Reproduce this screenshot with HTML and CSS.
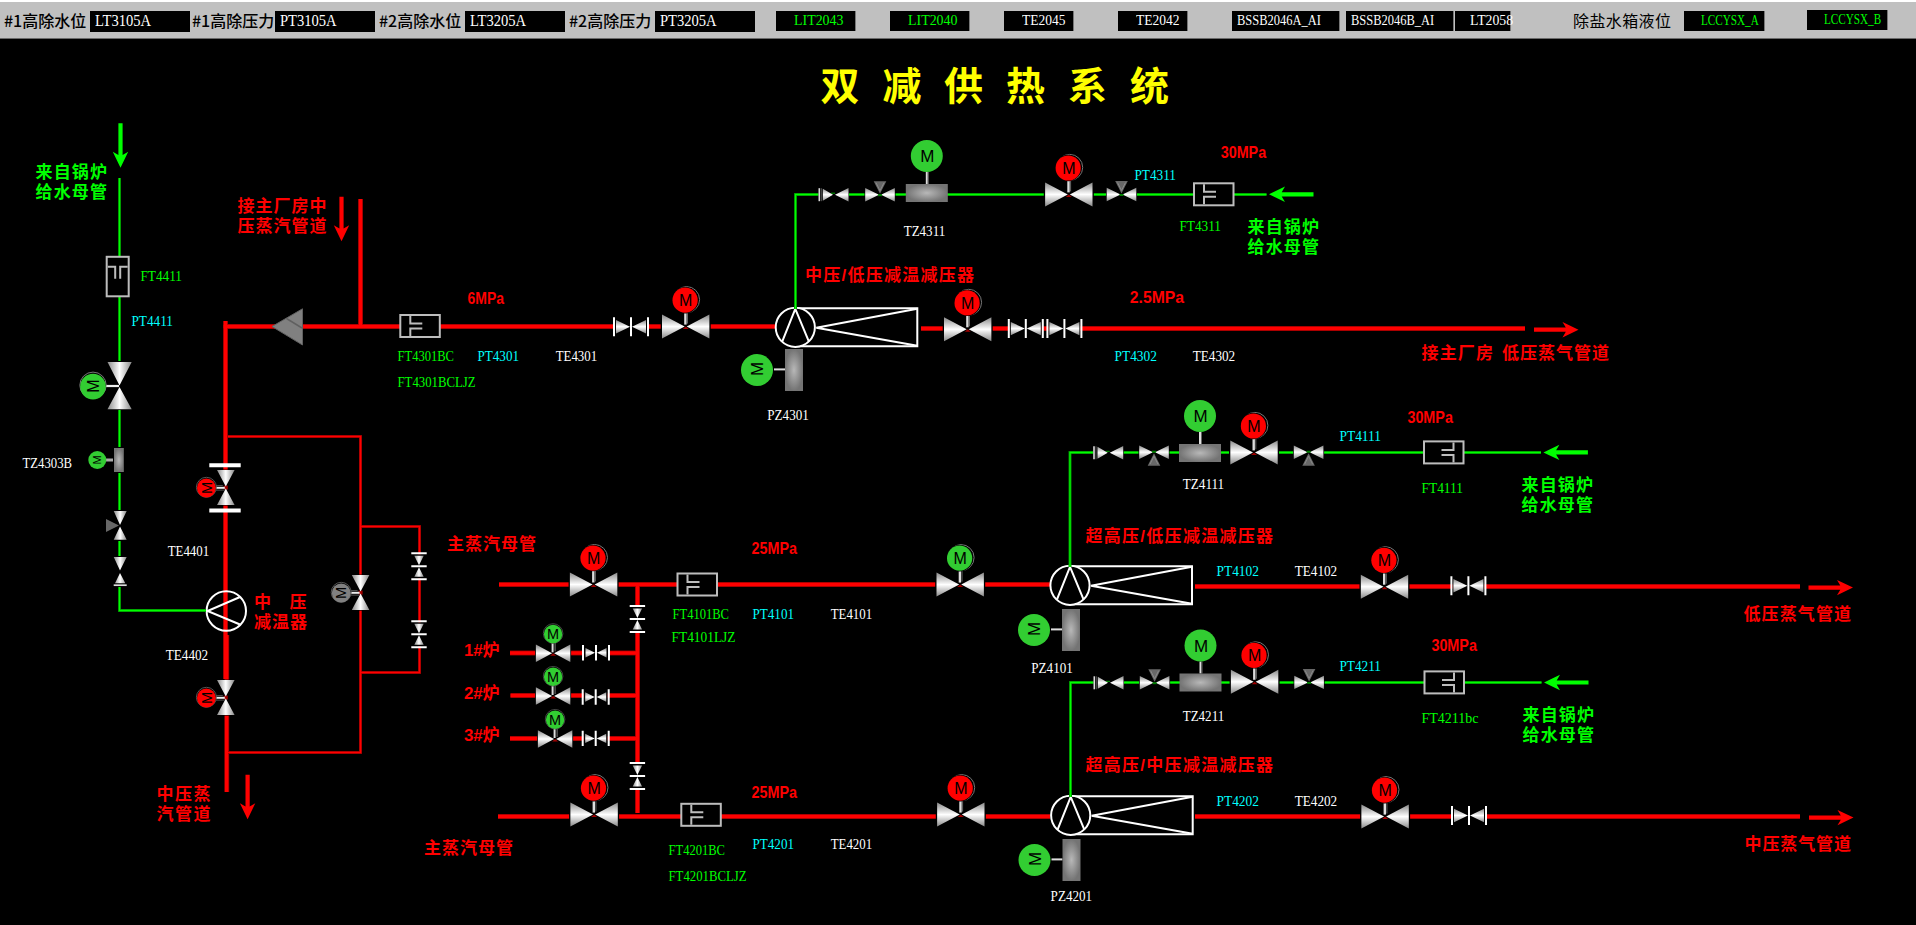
FILE: index.html
```html
<!DOCTYPE html>
<html lang="zh-CN">
<head>
<meta charset="utf-8">
<title>双减供热系统</title>
<link rel="stylesheet" href="styles.css">
</head>
<body>
<header class="bar">
  <span class="name n1">#1高除水位</span><span class="box wide b1"><b>LT3105A</b></span>
  <span class="name n2">#1高除压力</span><span class="box wide b2"><b>PT3105A</b></span>
  <span class="name n3">#2高除水位</span><span class="box wide b3"><b>LT3205A</b></span>
  <span class="name n4">#2高除压力</span><span class="box wide b4"><b>PT3205A</b></span>
  <span class="box lit b5"><b>LIT2043</b></span>
  <span class="box lit b6"><b>LIT2040</b></span>
  <span class="box te b7"><b>TE2045</b></span>
  <span class="box te b8"><b>TE2042</b></span>
  <span class="box bss b9"><b>BSSB2046A_AI</b></span>
  <span class="box bss b10"><b>BSSB2046B_AI</b></span>
  <span class="box lt b11"><b>LT2058</b></span>
  <span class="name tank">除盐水箱液位</span>
  <span class="box lcc b12"><b>LCCYSX_A</b></span>
  <span class="box lcc b13"><b>LCCYSX_B</b></span>
</header>
<main class="stage">
<svg class="diagram" width="1916" height="886" viewBox="0 39 1916 886">
<defs>
  <linearGradient id="gv" x1="0" y1="0" x2="0" y2="1"><stop offset="0" stop-color="#8a8a8a"/><stop offset=".5" stop-color="#fff"/><stop offset="1" stop-color="#8a8a8a"/></linearGradient>
  <linearGradient id="gh" x1="0" y1="0" x2="1" y2="0"><stop offset="0" stop-color="#8a8a8a"/><stop offset=".5" stop-color="#fff"/><stop offset="1" stop-color="#8a8a8a"/></linearGradient>
  <radialGradient id="gr"><stop offset="0" stop-color="#b8b8b8"/><stop offset="1" stop-color="#747474"/></radialGradient>

  <g id="valve">
    <rect x="-25" y="-13" width="50" height="26" fill="#000"/>
    <path d="M-3 2.5L0 0L3 2.5Z" fill="#a00000"/>
    <path d="M-23.7-12L-1 0L-23.7 12Z" fill="url(#gv)"/>
    <path d="M23.7-12L1 0L23.7 12Z" fill="url(#gv)"/>
    <path d="M-.3-14V-2" stroke="#ddd" stroke-width="2.4"/><path d="M1.8-14V-3" stroke="#666"/>
    <circle cx=".9" cy="-27" r="13" fill="none" stroke="#777"/>
    <circle cx="-.6" cy="-26.4" r="13.2" fill="#000"/>
    <circle cx="-.6" cy="-26.4" r="12.6" fill="currentColor"/>
    <text class="m" x="0" y="-20.6" font-size="16">M</text>
  </g>
  <g id="valve-s">
    <rect x="-18" y="-9.5" width="36" height="19" fill="#000"/>
    <path d="M-3 2.5L0 0L3 2.5Z" fill="#a00000"/>
    <path d="M-17.2-8.7L-1 0L-17.2 8.7Z" fill="url(#gv)"/>
    <path d="M17.2-8.7L1 0L17.2 8.7Z" fill="url(#gv)"/>
    <path d="M-.5-11V-1" stroke="#ddd" stroke-width="2"/><path d="M2-11V-2" stroke="#777"/>
    <circle cx="0" cy="-19.8" r="9.8" fill="none" stroke="#444"/>
    <circle cx="0" cy="-19.3" r="9.2" fill="currentColor"/>
    <text class="m" x="0" y="-14" font-size="14.5">M</text>
  </g>
  <g id="valve-v">
    <rect x="-9.5" y="-18" width="19" height="36" fill="#000"/>
    <path d="M-2-2H2V2H-2Z" fill="#a00000"/>
    <path d="M-8.8-17.5L0-1L8.8-17.5Z" fill="url(#gh)"/>
    <path d="M-8.8 17.5L0 1L8.8 17.5Z" fill="url(#gh)"/>
    <path d="M-10 .2H-1" stroke="#eee" stroke-width="2"/><path d="M-10 2.5H-1M-10-2H-3" stroke="#555"/>
    <circle cx="-19.4" cy="-.3" r="10" fill="none" stroke="#555"/>
    <circle cx="-19.4" cy=".4" r="9.4" fill="currentColor"/>
    <text class="m" transform="translate(-14.2 .4) rotate(-90)" font-size="14.5">M</text>
  </g>
  <g id="pair">
    <rect x="-16" y="-7" width="32" height="14" fill="#000"/>
    <path d="M-15-6.7L-1 0L-15 6.7ZM15-6.7L1 0L15 6.7Z" fill="url(#gv)"/>
    <path d="M-17-9.5V9.5M0-9.5V9.5M17-9.5V9.5" stroke="#fff" stroke-width="2"/>
  </g>
  <g id="pair-s">
    <rect x="-12" y="-6" width="24" height="12" fill="#000"/>
    <path d="M-10.5-4.7L-1 0L-10.5 4.7ZM10.5-4.7L1 0L10.5 4.7Z" fill="url(#gv)"/>
    <path d="M-13-7.7V7.7M0-7.7V7.7M13-7.7V7.7" stroke="#fff" stroke-width="2"/>
  </g>
  <g id="check">
    <rect x="-15.5" y="-7" width="30.5" height="14" fill="#000"/>
    <path d="M-3-1.5H1" stroke="#00a000"/>
    <path d="M-11.2-6L-1 0L-11.2 6ZM14.5-6.7L1 0L14.5 6.7Z" fill="url(#gv)"/>
    <path d="M-14.7-6.5V6.5" stroke="#ddd" stroke-width="1.6"/><path d="M-12.7-6.5V6.5" stroke="#555"/>
  </g>
  <g id="three">
    <rect x="-15.5" y="-7" width="31" height="14" fill="#000"/>
    <path d="M-6.3-13.5H6.3L0-1Z" fill="#686868"/><path d="M-4-12L0-4L4-12" fill="none" stroke="#8a8a8a"/>
    <path d="M-14.8-6.7L-1 0L-14.8 6.7ZM14.8-6.7L1 0L14.8 6.7Z" fill="url(#gv)"/>
    <path d="M-2 .5H2" stroke="#008000" stroke-width="2"/>
  </g>
  <g id="flow">
    <rect x="1" y="1" width="39.5" height="22" fill="#000" stroke="#bdbdbd" stroke-width="2"/>
    <path d="M11 2V9.5H23M11 22V14.5H23" fill="none" stroke="#bdbdbd" stroke-width="2"/>
  </g>
  <g id="reg">
    <path d="M0 16V28" stroke="#ddd" stroke-width="2"/><path d="M1.5 16V28" stroke="#666"/>
    <rect x="-21" y="28" width="42" height="18" fill="url(#gr)"/>
    <circle r="16" fill="#32cd32"/><text class="m" x=".6" y="6.3" font-size="17">M</text>
  </g>
  <g id="pump">
    <path d="M17-.6H28" stroke="#ddd" stroke-width="2"/>
    <rect x="28" y="-21" width="18" height="42" fill="url(#gr)"/>
    <circle r="16" fill="#32cd32"/><text class="m" transform="translate(6 -1) rotate(-90)" font-size="17">M</text>
  </g>
  <g id="reducer" fill="none" stroke="#fff" stroke-width="2">
    <path d="M0-19H122V19H0" fill="#000"/>
    <path d="M122-18.5L21 .4L122 18.5"/>
    <circle r="19.6" fill="#000"/>
    <path d="M-13 14L0-18.5L13.5 14"/>
  </g>
  <path id="arrow" d="M0 0L-7.7-16L-2.1-12.7V-44.5H2.1V-12.7L7.7-16Z" fill="currentColor"/>

  <g id="steam-pipes" fill="none">
    <path d="M225.5 321V679M226.7 635V792M223.5 326.5H775M360.5 199V328M921 328.5H1525M499 584.5H1050M1195 586.5H1800M498 816.5H1050M1195 816.5H1800M637.5 586V813M510 653H638M510.5 695.5H638M510 738.5H638"/>
  </g>
  <path id="bypass" fill="none" d="M228 436.5H360.5V752.5H228M361 526.5H419.5V672.5H361"/>
  <path id="water-pipes" fill="none" d="M119.5 178V610.5H206M795.5 309V194.5H1266.5M1070 567V452.5H1541M1070.5 797V682.5H1541.5"/>
</defs>

<use href="#steam-pipes" stroke="#900000" stroke-width="5"/>
<use href="#steam-pipes" stroke="#ff0000" stroke-width="3.4"/>
<use href="#bypass" stroke="#900000" stroke-width="3"/>
<use href="#bypass" stroke="#ff0000" stroke-width="1.6"/>

<g fill="none" stroke="#fff" stroke-width="2">
  <circle cx="226.3" cy="611" r="19.7"/><path d="M240 597L207.5 611L240 624.5"/>
</g>
<use href="#reducer" x="795.3" y="327.3"/>
<use href="#reducer" x="1070" y="585.3"/>
<use href="#reducer" x="1070.7" y="815.3"/>
<use href="#water-pipes" stroke="#008c00" stroke-width="3"/>
<use href="#water-pipes" stroke="#00ff00" stroke-width="1.3"/>

<g class="green">
  <use href="#arrow" x="120.5" y="167.7"/>
  <use href="#arrow" transform="translate(1269 194.3) rotate(90)"/>
  <use href="#arrow" transform="translate(1543.4 452.4) rotate(90)"/>
  <use href="#arrow" transform="translate(1544 682.5) rotate(90)"/>
</g>
<g class="red">
  <use href="#arrow" x="341.5" y="241.3"/>
  <use href="#arrow" x="247.6" y="819.3"/>
  <use href="#arrow" transform="translate(1578.5 329.7) rotate(-90)"/>
  <use href="#arrow" transform="translate(1853 587.6) rotate(-90)"/>
  <use href="#arrow" transform="translate(1853.5 817.6) rotate(-90)"/>
</g>

<!-- feed-water branch on the left -->
<use href="#flow" transform="translate(129.7 255.8) rotate(90)"/>
<g>
  <rect x="107" y="361" width="25" height="49" fill="#000"/>
  <path d="M107.5 362L119.5 385.5L131.7 362ZM107.5 409.3L119.5 387L131.7 409.3Z" fill="url(#gh)"/>
  <path d="M106 386H119" stroke="#eee" stroke-width="2.2"/>
  <circle cx="93" cy="385.3" r="13.2" fill="none" stroke="#777"/>
  <circle cx="93" cy="386.6" r="12.8" fill="#32cd32"/>
  <text class="m" transform="translate(99 386) rotate(-90)" font-size="16">M</text>
</g>
<g>
  <path d="M106 460H114" stroke="#aaa" stroke-width="3"/>
  <rect x="113" y="447" width="12" height="26" fill="#000"/>
  <rect x="114" y="448" width="9.8" height="24" fill="url(#gr)"/>
  <circle cx="97.3" cy="460" r="9" fill="#32cd32"/>
  <text class="m" transform="translate(101.2 460) rotate(-90)" font-size="11">M</text>
</g>
<g>
  <rect x="113" y="510" width="14" height="31" fill="#000"/>
  <path d="M106 519V532L119 525.5Z" fill="#686868"/>
  <path d="M113.7 511L120 525L126.7 511ZM113.7 539.8L120 526.5L126.7 539.8Z" fill="url(#gh)"/>
  <rect x="113" y="556" width="14" height="31" fill="#000"/>
  <path d="M113.7 557L120 570.5L126.7 557ZM115 583.3L120 573L125.3 583.3Z" fill="url(#gh)"/>
  <path d="M113.7 585.2H126.7" stroke="#ddd" stroke-width="1.7"/>
</g>

<!-- medium-pressure desuperheater column -->
<path d="M209.3 465.3H240.7M209.3 510.6H240.7" stroke="#fff" stroke-width="4"/>
<use class="red" href="#valve-v" x="225.8" y="487.6"/>
<use class="red" href="#valve-v" x="225.8" y="697.6"/>
<use class="gray" href="#valve-v" x="360.6" y="592.6"/>
<use href="#pair-s" transform="translate(419 566.3) rotate(90)"/>
<use href="#pair-s" transform="translate(419 634.3) rotate(90)"/>
<path d="M272 326.5L302.5 308.8V345Z" fill="#808080" stroke="#606060"/><path d="M286.5 318.5L302 328" stroke="#606060" stroke-width="1.5"/>

<!-- 6 MPa line -->
<use href="#flow" x="399.3" y="314"/>
<use href="#pair" x="631" y="326.7"/>
<use class="red" href="#valve" x="685.7" y="326.6"/>
<use href="#pump" x="757" y="370"/>
<use href="#check" x="834" y="194.7"/>
<use href="#three" x="880" y="194.7"/>
<use href="#reg" x="926.8" y="156"/>
<use class="red" href="#valve" x="1068.8" y="194.4"/>
<use href="#three" x="1121.5" y="194.5"/>
<use href="#flow" x="1193" y="182.3"/>
<use class="red" href="#valve" x="967.7" y="329.3"/>
<use href="#pair" x="1025.8" y="328.6"/>
<use href="#pair" x="1064.4" y="328.6"/>

<!-- upper 25 MPa line -->
<use class="red" href="#valve" x="593.6" y="584.5"/>
<use href="#flow" x="676.5" y="572.5"/>
<use class="lime" href="#valve" x="960.2" y="584.6"/>
<use href="#pump" x="1034" y="630"/>
<use href="#check" x="1108.7" y="452.8"/>
<use href="#three" transform="translate(1154 452.2) scale(1 -1)"/>
<use href="#reg" x="1200" y="416"/>
<use class="red" href="#valve" x="1254" y="452.4"/>
<use href="#three" transform="translate(1308.6 452.2) scale(1 -1)"/>
<use href="#flow" transform="translate(1464.5 440.4) scale(-1 1)"/>
<use class="red" href="#valve" x="1384.5" y="586.7"/>
<use href="#pair" x="1468.4" y="585.7"/>

<!-- boiler headers -->
<use href="#pair-s" transform="translate(637.4 619) rotate(90)"/>
<use href="#pair-s" transform="translate(637.4 776) rotate(90)"/>
<use class="lime" href="#valve-s" x="553.1" y="653.3"/>
<use class="lime" href="#valve-s" x="553.1" y="696"/>
<use class="lime" href="#valve-s" x="555.1" y="739"/>
<use href="#pair-s" x="596" y="652.7"/>
<use href="#pair-s" x="595.7" y="697"/>
<use href="#pair-s" x="595.7" y="738.4"/>

<!-- lower 25 MPa line -->
<use class="red" href="#valve" x="594.1" y="814.6"/>
<use href="#flow" x="680.3" y="802.8"/>
<use class="red" href="#valve" x="960.8" y="814.6"/>
<use href="#pump" x="1034.5" y="860"/>
<use href="#check" x="1109" y="682.8"/>
<use href="#three" x="1154.6" y="682.7"/>
<use href="#reg" x="1200.5" y="645.5"/>
<use class="red" href="#valve" x="1254.6" y="681.8"/>
<use href="#three" x="1309.1" y="682.4"/>
<use href="#flow" transform="translate(1465 670.4) scale(-1 1)"/>
<use class="red" href="#valve" x="1385.1" y="816.6"/>
<use href="#pair" x="1469" y="815.5"/>

<text class="title" x="820.5 882.5 944 1006 1068 1130" y="99.5">双减供热系统</text>

<g class="label green">
  <text x="35.5" y="178" textLength="71.5">来自锅炉</text><text x="35.5" y="198" textLength="71.5">给水母管</text>
  <text x="1247.5" y="233" textLength="71.5">来自锅炉</text><text x="1247.5" y="253" textLength="71.5">给水母管</text>
  <text x="1521.5" y="491" textLength="71.5">来自锅炉</text><text x="1521.5" y="511" textLength="71.5">给水母管</text>
  <text x="1522.5" y="721" textLength="71.5">来自锅炉</text><text x="1522.5" y="741" textLength="71.5">给水母管</text>
</g>
<g class="label red">
  <text x="237.5" y="212" textLength="89">接主厂房中</text><text x="237.5" y="232" textLength="89">压蒸汽管道</text>
  <text x="254" y="608">中</text><text x="289.5" y="608">压</text><text x="254" y="628" textLength="53">减温器</text>
  <text x="156.5" y="800" textLength="54">中压蒸</text><text x="156.5" y="820" textLength="54">汽管道</text>
  <text x="805" y="281" textLength="169">中压/低压减温减压器</text>
  <text x="1421.5" y="359" textLength="71.5">接主厂房</text><text x="1502" y="359" textLength="107">低压蒸气管道</text>
  <text x="447" y="550" textLength="89">主蒸汽母管</text>
  <text x="424" y="854" textLength="89">主蒸汽母管</text>
  <text x="464" y="656" textLength="35.5">1#炉</text><text x="464" y="699" textLength="35.5">2#炉</text><text x="464" y="741" textLength="35.5">3#炉</text>
  <text x="1085.5" y="542" textLength="187.5">超高压/低压减温减压器</text>
  <text x="1085.5" y="771" textLength="187.5">超高压/中压减温减压器</text>
  <text x="1743.5" y="620" textLength="107.5">低压蒸气管道</text>
  <text x="1744.5" y="850" textLength="106.5">中压蒸气管道</text>
</g>
<g class="mpa red">
  <text x="467.5" y="304" textLength="36.5" lengthAdjust="spacingAndGlyphs">6MPa</text>
  <text x="1220.7" y="158" textLength="45.5" lengthAdjust="spacingAndGlyphs">30MPa</text>
  <text x="1129.8" y="303" textLength="54.3" lengthAdjust="spacingAndGlyphs">2.5MPa</text>
  <text x="1407.4" y="423" textLength="45.5" lengthAdjust="spacingAndGlyphs">30MPa</text>
  <text x="1431.4" y="651" textLength="45.5" lengthAdjust="spacingAndGlyphs">30MPa</text>
  <text x="751.5" y="554" textLength="45.5" lengthAdjust="spacingAndGlyphs">25MPa</text>
  <text x="751.5" y="798" textLength="45.5" lengthAdjust="spacingAndGlyphs">25MPa</text>
</g>
<g class="tag green">
  <text x="140.5" y="281" textLength="41.5" lengthAdjust="spacingAndGlyphs">FT4411</text>
  <text x="397.5" y="361" textLength="56.5" lengthAdjust="spacingAndGlyphs">FT4301BC</text>
  <text x="397.5" y="387" textLength="78" lengthAdjust="spacingAndGlyphs">FT4301BCLJZ</text>
  <text x="1179.5" y="231" textLength="41.5" lengthAdjust="spacingAndGlyphs">FT4311</text>
  <text x="1421.5" y="493" textLength="41.5" lengthAdjust="spacingAndGlyphs">FT4111</text>
  <text x="1421.5" y="723" textLength="57" lengthAdjust="spacingAndGlyphs">FT4211bc</text>
  <text x="672.5" y="619" textLength="56.5" lengthAdjust="spacingAndGlyphs">FT4101BC</text>
  <text x="671.5" y="642" textLength="64" lengthAdjust="spacingAndGlyphs">FT4101LJZ</text>
  <text x="668.5" y="855" textLength="56.5" lengthAdjust="spacingAndGlyphs">FT4201BC</text>
  <text x="668.5" y="881" textLength="78" lengthAdjust="spacingAndGlyphs">FT4201BCLJZ</text>
</g>
<g class="tag cyan">
  <text x="131.5" y="326" textLength="41.5" lengthAdjust="spacingAndGlyphs">PT4411</text>
  <text x="477.5" y="361" textLength="41.5" lengthAdjust="spacingAndGlyphs">PT4301</text>
  <text x="1134.5" y="180" textLength="41.5" lengthAdjust="spacingAndGlyphs">PT4311</text>
  <text x="1114.5" y="361" textLength="42.5" lengthAdjust="spacingAndGlyphs">PT4302</text>
  <text x="1339.5" y="441" textLength="41.5" lengthAdjust="spacingAndGlyphs">PT4111</text>
  <text x="1339.5" y="671" textLength="41.5" lengthAdjust="spacingAndGlyphs">PT4211</text>
  <text x="752.5" y="619" textLength="41.5" lengthAdjust="spacingAndGlyphs">PT4101</text>
  <text x="752.5" y="849" textLength="41.5" lengthAdjust="spacingAndGlyphs">PT4201</text>
  <text x="1216.5" y="576" textLength="42.5" lengthAdjust="spacingAndGlyphs">PT4102</text>
  <text x="1216.5" y="806" textLength="42.5" lengthAdjust="spacingAndGlyphs">PT4202</text>
</g>
<g class="tag white">
  <text x="22.5" y="468" textLength="49.5" lengthAdjust="spacingAndGlyphs">TZ4303B</text>
  <text x="167.7" y="556" textLength="41.5" lengthAdjust="spacingAndGlyphs">TE4401</text>
  <text x="165.7" y="660" textLength="42.5" lengthAdjust="spacingAndGlyphs">TE4402</text>
  <text x="555.7" y="361" textLength="41.5" lengthAdjust="spacingAndGlyphs">TE4301</text>
  <text x="767.3" y="420" textLength="41.5" lengthAdjust="spacingAndGlyphs">PZ4301</text>
  <text x="903.7" y="236" textLength="41.5" lengthAdjust="spacingAndGlyphs">TZ4311</text>
  <text x="1192.7" y="361" textLength="42.5" lengthAdjust="spacingAndGlyphs">TE4302</text>
  <text x="1182.7" y="489" textLength="41.5" lengthAdjust="spacingAndGlyphs">TZ4111</text>
  <text x="1182.7" y="721" textLength="41.5" lengthAdjust="spacingAndGlyphs">TZ4211</text>
  <text x="830.7" y="619" textLength="41.5" lengthAdjust="spacingAndGlyphs">TE4101</text>
  <text x="830.7" y="849" textLength="41.5" lengthAdjust="spacingAndGlyphs">TE4201</text>
  <text x="1294.7" y="576" textLength="42.5" lengthAdjust="spacingAndGlyphs">TE4102</text>
  <text x="1294.7" y="806" textLength="42.5" lengthAdjust="spacingAndGlyphs">TE4202</text>
  <text x="1031.3" y="673" textLength="41.5" lengthAdjust="spacingAndGlyphs">PZ4101</text>
  <text x="1050.6" y="901" textLength="41.5" lengthAdjust="spacingAndGlyphs">PZ4201</text>
</g>
</svg>
</main>
</body>
</html>
```

FILE: styles.css
```css
* { box-sizing: border-box; }
body {
  margin: 0;
  background: #000;
  overflow: hidden;
}
.bar {
  display: flex;
  align-items: flex-start;
  height: 39px;
  padding-top: 9px;
  background: #c0c0c0;
  border-top: 2px solid #fff;
  border-bottom: 1px solid #6a6a6a;
  white-space: nowrap;
}
.name {
  flex: none;
  height: 20px;
  font: 500 16px/18px "Noto Sans CJK SC", sans-serif;
  color: #000;
}
.n1 { width: 86px; margin-left: 4px; }
.n2 { width: 83px; margin-left: 2px; }
.n3 { width: 86px; margin-left: 4px; }
.n4 { width: 86px; margin-left: 4px; }
.tank { width: 98px; margin: 0 13px 0 62px; font-weight: 400; letter-spacing: .4px; }
.box {
  flex: none;
  height: 20px;
  background: #000;
  border-right: 1px solid #777;
  color: #fff;
  font: 14.5px/19px "Liberation Serif", serif;
}
.box b {
  display: inline-block;
  font-weight: 400;
  transform-origin: 0 50%;
}
.wide { width: 100px; height: 21px; padding-left: 5px; border-right: 0; font-size: 16px; line-height: 20px; }
.wide b { transform: scaleX(.91); }
.lit { width: 80px; padding-left: 18px; color: #0f0; }
.lit b { transform: scaleX(.96); }
.te { width: 70px; padding-left: 18px; }
.te b { transform: scaleX(.93); }
.bss { width: 108px; padding-left: 5px; }
.bss b { transform: scaleX(.86); }
.lt { width: 56px; padding-left: 15px; }
.lt b { transform: scaleX(.95); }
.lcc { width: 81px; padding-left: 17px; color: #0f0; }
.lcc b { transform: scaleX(.77); }
.b5 { margin-left: 21px; }
.b6, .b7 { margin-left: 34px; }
.b8 { margin-left: 44px; }
.b9 { margin-left: 44px; }
.b10 { margin-left: 6px; }
.b11 { margin-left: 1px; }
.b13 { margin: -1px 0 0 42px; }

.stage { height: 886px; }
.diagram { display: block; }
.red { color: #f00; }
.green { color: #0f0; }
.lime { color: #32cd32; }
.gray { color: #808080; }
.cyan { color: #0ff; }
.white { color: #fff; }
.title {
  font: 700 39px "Noto Sans CJK SC", sans-serif;
  fill: #ff0;
}
.label {
  font: 700 17px "Liberation Sans", "Noto Sans CJK SC", sans-serif;
  fill: currentColor;
}
.mpa {
  font: 700 16.5px "Liberation Sans", sans-serif;
  fill: currentColor;
}
.tag {
  font: 14.8px "Liberation Serif", serif;
  fill: currentColor;
}
.m {
  font-family: "Liberation Sans", sans-serif;
  text-anchor: middle;
  fill: #000;
}
```
